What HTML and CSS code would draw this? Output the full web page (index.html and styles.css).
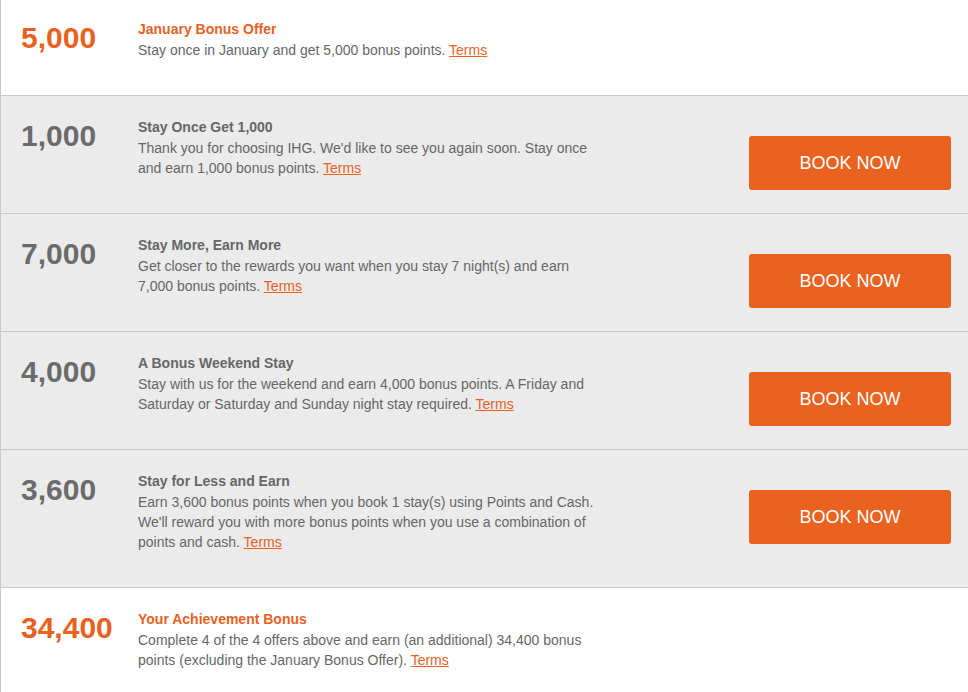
FILE: index.html
```html
<!DOCTYPE html>
<html lang="en">
<head>
    <meta charset="UTF-8">
    <meta name="viewport" content="width=device-width, initial-scale=1.0">
    <title>IHG Bonus Offers</title>
    <link rel="stylesheet" href="styles.css">
</head>
<body>
    <div class="offers">
        <div class="offer featured first">
            <div class="points">5,000</div>
            <div class="details">
                <h3>January Bonus Offer</h3>
                <p>Stay once in January and get 5,000 bonus points. <a href="#">Terms</a></p>
            </div>
        </div>

        <div class="offer">
            <div class="points">1,000</div>
            <div class="details">
                <h3>Stay Once Get 1,000</h3>
                <p>Thank you for choosing IHG. We'd like to see you again soon. Stay once and earn 1,000 bonus points. <a href="#">Terms</a></p>
            </div>
            <a class="book-btn" href="#">BOOK NOW</a>
        </div>

        <div class="offer">
            <div class="points">7,000</div>
            <div class="details">
                <h3>Stay More, Earn More</h3>
                <p>Get closer to the rewards you want when you stay 7 night(s) and earn 7,000 bonus points. <a href="#">Terms</a></p>
            </div>
            <a class="book-btn" href="#">BOOK NOW</a>
        </div>

        <div class="offer">
            <div class="points">4,000</div>
            <div class="details">
                <h3>A Bonus Weekend Stay</h3>
                <p>Stay with us for the weekend and earn 4,000 bonus points. A Friday and Saturday or Saturday and Sunday night stay required. <a href="#">Terms</a></p>
            </div>
            <a class="book-btn" href="#">BOOK NOW</a>
        </div>

        <div class="offer">
            <div class="points">3,600</div>
            <div class="details">
                <h3>Stay for Less and Earn</h3>
                <p>Earn 3,600 bonus points when you book 1 stay(s) using Points and Cash. We'll reward you with more bonus points when you use a combination of points and cash. <a href="#">Terms</a></p>
            </div>
            <a class="book-btn" href="#">BOOK NOW</a>
        </div>

        <div class="offer featured">
            <div class="points">34,400</div>
            <div class="details">
                <h3>Your Achievement Bonus</h3>
                <p>Complete 4 of the 4 offers above and earn (an additional) 34,400 bonus points (excluding the January Bonus Offer). <a href="#">Terms</a></p>
            </div>
        </div>
    </div>
</body>
</html>
```

FILE: styles.css
```css
:root {
    --orange: #e9611e;
    --btn-orange: #ea621f;
    --gray-text: #666768;
    --row-bg: #ebebeb;
    --line: #c9c9c9;
}

* {
    margin: 0;
    padding: 0;
    box-sizing: border-box;
}

body {
    background: #fff;
    font-family: "Liberation Sans", Arial, sans-serif;
    color: var(--gray-text);
    overflow: hidden;
}

.offers {
    border-left: 1px solid var(--line);
}

.offer {
    display: flex;
    align-items: flex-start;
    background: var(--row-bg);
    border-bottom: 1px solid var(--line);
    padding: 21px 17px 35px 20px;
}

.offer.first {
    margin-top: -2px;
}

.offer.featured {
    background: #fff;
}

.points {
    width: 117px;
    font-size: 30px;
    line-height: 40px;
    font-weight: bold;
    color: #6a6b6c;
    margin-top: -1px;
}

.featured .points,
.featured h3 {
    color: var(--orange);
}

.details {
    width: 462px;
}

.details h3 {
    font-size: 14px;
    line-height: 20px;
    font-weight: bold;
    margin-bottom: 1px;
}

.details p {
    font-size: 14px;
    line-height: 20px;
}

.details a {
    color: var(--orange);
    text-decoration: underline;
}

/* button hangs below the text block without stretching the row */
.book-btn {
    margin-left: auto;
    margin-top: 19px;
    margin-bottom: -21px;
    width: 202px;
    height: 54px;
    background: var(--btn-orange);
    color: #fff;
    border-radius: 3px;
    font-size: 18px;
    text-decoration: none;
    display: flex;
    align-items: center;
    justify-content: center;
}
```
